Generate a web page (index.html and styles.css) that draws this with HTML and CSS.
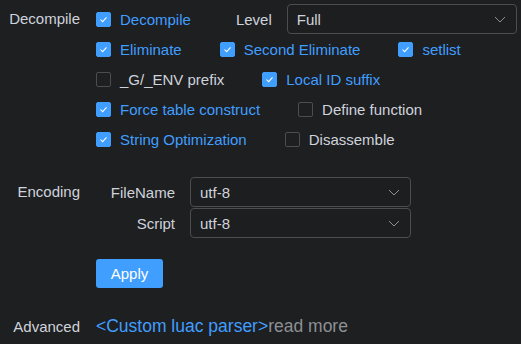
FILE: index.html
```html
<!DOCTYPE html>
<html lang="en">
  <head>
    <meta charset="UTF-8" />
    <meta name="viewport" content="width=device-width, initial-scale=1.0" />
    <title>Decompiler Settings</title>
    <link rel="stylesheet" href="styles.css">
  </head>
  <body>
    <form class="settings-form">
      <div class="form-item">
        <div class="item-label row-label">Decompile</div>
        <div class="item-content">
          <div class="opt-row">
            <label class="check is-checked"><span class="box"><svg viewBox="0 0 15 15"><polyline points="4,7.5 6.5,10 11,5" /></svg></span><span class="check-text">Decompile</span></label>
            <span class="level-label">Level</span>
            <div class="select level-select">
              <span>Full</span>
              <svg class="chevron" viewBox="0 0 12 12"><polyline points="1,4 6,9 11,4" /></svg>
            </div>
          </div>
          <div class="opt-row">
            <label class="check is-checked"><span class="box"><svg viewBox="0 0 15 15"><polyline points="4,7.5 6.5,10 11,5" /></svg></span><span class="check-text">Eliminate</span></label>
            <label class="check is-checked"><span class="box"><svg viewBox="0 0 15 15"><polyline points="4,7.5 6.5,10 11,5" /></svg></span><span class="check-text">Second Eliminate</span></label>
            <label class="check is-checked"><span class="box"><svg viewBox="0 0 15 15"><polyline points="4,7.5 6.5,10 11,5" /></svg></span><span class="check-text">setlist</span></label>
          </div>
          <div class="opt-row">
            <label class="check"><span class="box"></span><span class="check-text">_G/_ENV prefix</span></label>
            <label class="check is-checked"><span class="box"><svg viewBox="0 0 15 15"><polyline points="4,7.5 6.5,10 11,5" /></svg></span><span class="check-text">Local ID suffix</span></label>
          </div>
          <div class="opt-row">
            <label class="check is-checked"><span class="box"><svg viewBox="0 0 15 15"><polyline points="4,7.5 6.5,10 11,5" /></svg></span><span class="check-text">Force table construct</span></label>
            <label class="check"><span class="box"></span><span class="check-text">Define function</span></label>
          </div>
          <div class="opt-row">
            <label class="check is-checked"><span class="box"><svg viewBox="0 0 15 15"><polyline points="4,7.5 6.5,10 11,5" /></svg></span><span class="check-text">String Optimization</span></label>
            <label class="check"><span class="box"></span><span class="check-text">Disassemble</span></label>
          </div>
        </div>
      </div>

      <div class="form-item encoding">
        <div class="item-label row-label">Encoding</div>
        <div class="item-content enc-list">
          <div class="enc-row">
            <span class="sub-label">FileName</span>
            <div class="select enc-select">
              <span>utf-8</span>
              <svg class="chevron" viewBox="0 0 12 12"><polyline points="1,4 6,9 11,4" /></svg>
            </div>
          </div>
          <div class="enc-row">
            <span class="sub-label">Script</span>
            <div class="select enc-select">
              <span>utf-8</span>
              <svg class="chevron" viewBox="0 0 12 12"><polyline points="1,4 6,9 11,4" /></svg>
            </div>
          </div>
        </div>
      </div>

      <div class="form-item actions">
        <div class="item-label"></div>
        <div class="item-content">
          <button type="button" class="apply-button">Apply</button>
        </div>
      </div>

      <div class="form-item advanced">
        <div class="item-label">Advanced</div>
        <div class="item-content adv-links">
          <a class="parser-link">&lt;Custom luac parser&gt;</a><a class="read-more">read more</a>
        </div>
      </div>
    </form>
  </body>
</html>
```

FILE: styles.css
```css
body {
  margin: 0;
  padding-top: 4px;
  background-color: #1e1f21;
  color: #cfd3dc;
  font-family: "Liberation Sans", Arial, sans-serif;
  font-size: 15px;
}

.form-item {
  display: flex;
}

.item-label {
  width: 80px;
  flex-shrink: 0;
  margin-right: 16px;
  text-align: right;
}

.row-label {
  line-height: 30px;
}

.item-content {
  flex: 1;
}

.opt-row {
  display: flex;
  align-items: center;
  height: 30px;
}

.check {
  display: flex;
  align-items: center;
  margin-right: 38px;
  cursor: pointer;
}

.box {
  width: 13px;
  height: 13px;
  border: 1px solid #4c4d4f;
  border-radius: 2px;
  display: flex;
  align-items: center;
  justify-content: center;
}

.box svg {
  width: 15px;
  height: 15px;
  fill: none;
  stroke: #ffffff;
  stroke-width: 1.2;
}

.check-text {
  padding-left: 9px;
  white-space: nowrap;
}

.is-checked .box {
  background-color: #409eff;
  border-color: #409eff;
}

.is-checked .check-text {
  color: #409eff;
}

.level-label {
  margin-left: 7px;
  margin-right: 15px;
}

.select {
  box-sizing: border-box;
  display: flex;
  align-items: center;
  justify-content: space-between;
  height: 30px;
  padding: 0 10px 0 9px;
  border: 1px solid #4c4d4f;
  border-radius: 4px;
  background-color: #1d1e1f;
}

.level-select {
  width: 230px;
}

.chevron {
  width: 12px;
  height: 12px;
  fill: none;
  stroke: #8d9095;
  stroke-width: 1;
}

.encoding {
  margin-top: 23px;
}

.enc-list {
  display: flex;
  flex-direction: column;
  gap: 1px;
}

.enc-row {
  display: flex;
  align-items: center;
}

.sub-label {
  width: 79px;
  margin-right: 15px;
  text-align: right;
}

.enc-select {
  width: 221px;
}

.actions {
  margin-top: 21px;
}

.apply-button {
  width: 67px;
  height: 29px;
  border: none;
  border-radius: 3px;
  background-color: #409eff;
  color: #ffffff;
  font-family: inherit;
  font-size: 15px;
  cursor: pointer;
}

.advanced {
  margin-top: 26px;
  align-items: baseline;
  line-height: 24px;
}

.adv-links {
  font-size: 17.5px;
}

.parser-link {
  color: #409eff;
}

.read-more {
  color: #8d9095;
}
```
